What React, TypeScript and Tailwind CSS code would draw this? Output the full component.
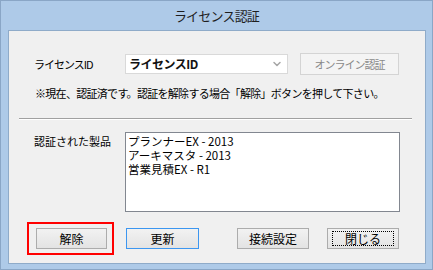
import { ChevronDown } from "lucide-react";

const jp = { fontFamily: '"Noto Sans CJK JP", "Noto Sans", sans-serif' };

const Btn = ({ label, className = "", focus = false }: { label: string; className?: string; focus?: boolean }) => {
  return (
    <button
      className={`h-[21px] flex items-center justify-center bg-gradient-to-b from-[#f2f2f2] to-[#e3e3e3] text-[12px] text-black border ${className}`}
    >
      {focus ? (
        <span className="flex items-center justify-center w-[calc(100%-8px)] h-[15px] border border-dotted border-black">
          {label}
        </span>
      ) : (
        label
      )}
    </button>
  );
};

const App = () => {
  return (
    <div
      className="w-[433px] h-[270px] bg-[#aecae8] border border-[#8aa6c6] flex flex-col px-[7px]"
      style={jp}
    >
      <div className="h-[29px] flex items-center justify-center text-[13px] tracking-[-0.8px] text-[#1e1e1e]">
        ライセンス認証
      </div>

      <div className="w-[418px] h-[234px] bg-[#f0f0f0] border border-[#8fabc9] flex flex-col relative">
        <div className="flex items-center h-[22px] mt-[22px] pl-[25px]">
          <span className="w-[91px] text-[11px] tracking-[-1px] leading-none">ライセンスID</span>
          <div className="w-[163px] h-[20px] bg-white border border-[#d9d9d9] flex items-center justify-between pl-[3px] pr-[4px]">
            <span className="text-[12px] font-bold tracking-[-0.5px] text-[#111]">ライセンスID</span>
            <ChevronDown size={12} strokeWidth={3} className="text-[#a6a6a6]" />
          </div>
          <div className="ml-[12px] w-[99px] h-[22px] border border-[#d4d4d4] bg-[#f4f4f4] flex items-center justify-center text-[11px] tracking-[-1px] text-[#8a8a8a]">
            オンライン認証
          </div>
        </div>

        <p className="mt-[10px] pl-[26px] text-[11px] tracking-[-0.7px] leading-[16px] text-black">
          ※現在、認証済です。認証を解除する場合「解除」ボタンを押して下さい。
        </p>

        <div className="mt-[17px] ml-[10px] w-[393px] h-[2px] border-t border-t-[#a0a0a0] border-b border-b-white" />

        <div className="flex items-start mt-[12px] pl-[25px]">
          <span className="w-[91px] text-[11px] leading-[16px] mt-[1px]">認証された製品</span>
          <div className="w-[275px] h-[80px] bg-white border border-[#828790] pl-[2px] pt-[1px] text-[11.5px] leading-[14px] text-black whitespace-pre">
            <div>プランナーEX - 2013</div>
            <div>アーキマスタ - 2013</div>
            <div>営業見積EX - R1</div>
          </div>
        </div>

        <div className="flex items-center mt-[16px] pl-[27px]">
          <div className="relative">
            <Btn label="解除" className="w-[71px] border-[#acacac]" />
            <div className="absolute -left-[9px] -top-[6px] w-[87px] h-[33px] border-2 border-[#ff0000]" />
          </div>
          <Btn label="更新" className="ml-[19px] w-[73px] border-[#3c96f0]" />
          <Btn label="接続設定" className="ml-[38px] w-[72px] border-[#acacac]" />
          <Btn label="閉じる" focus className="ml-[18px] w-[72px] border-[#acacac]" />
        </div>
      </div>
    </div>
  );
};

export default App;
